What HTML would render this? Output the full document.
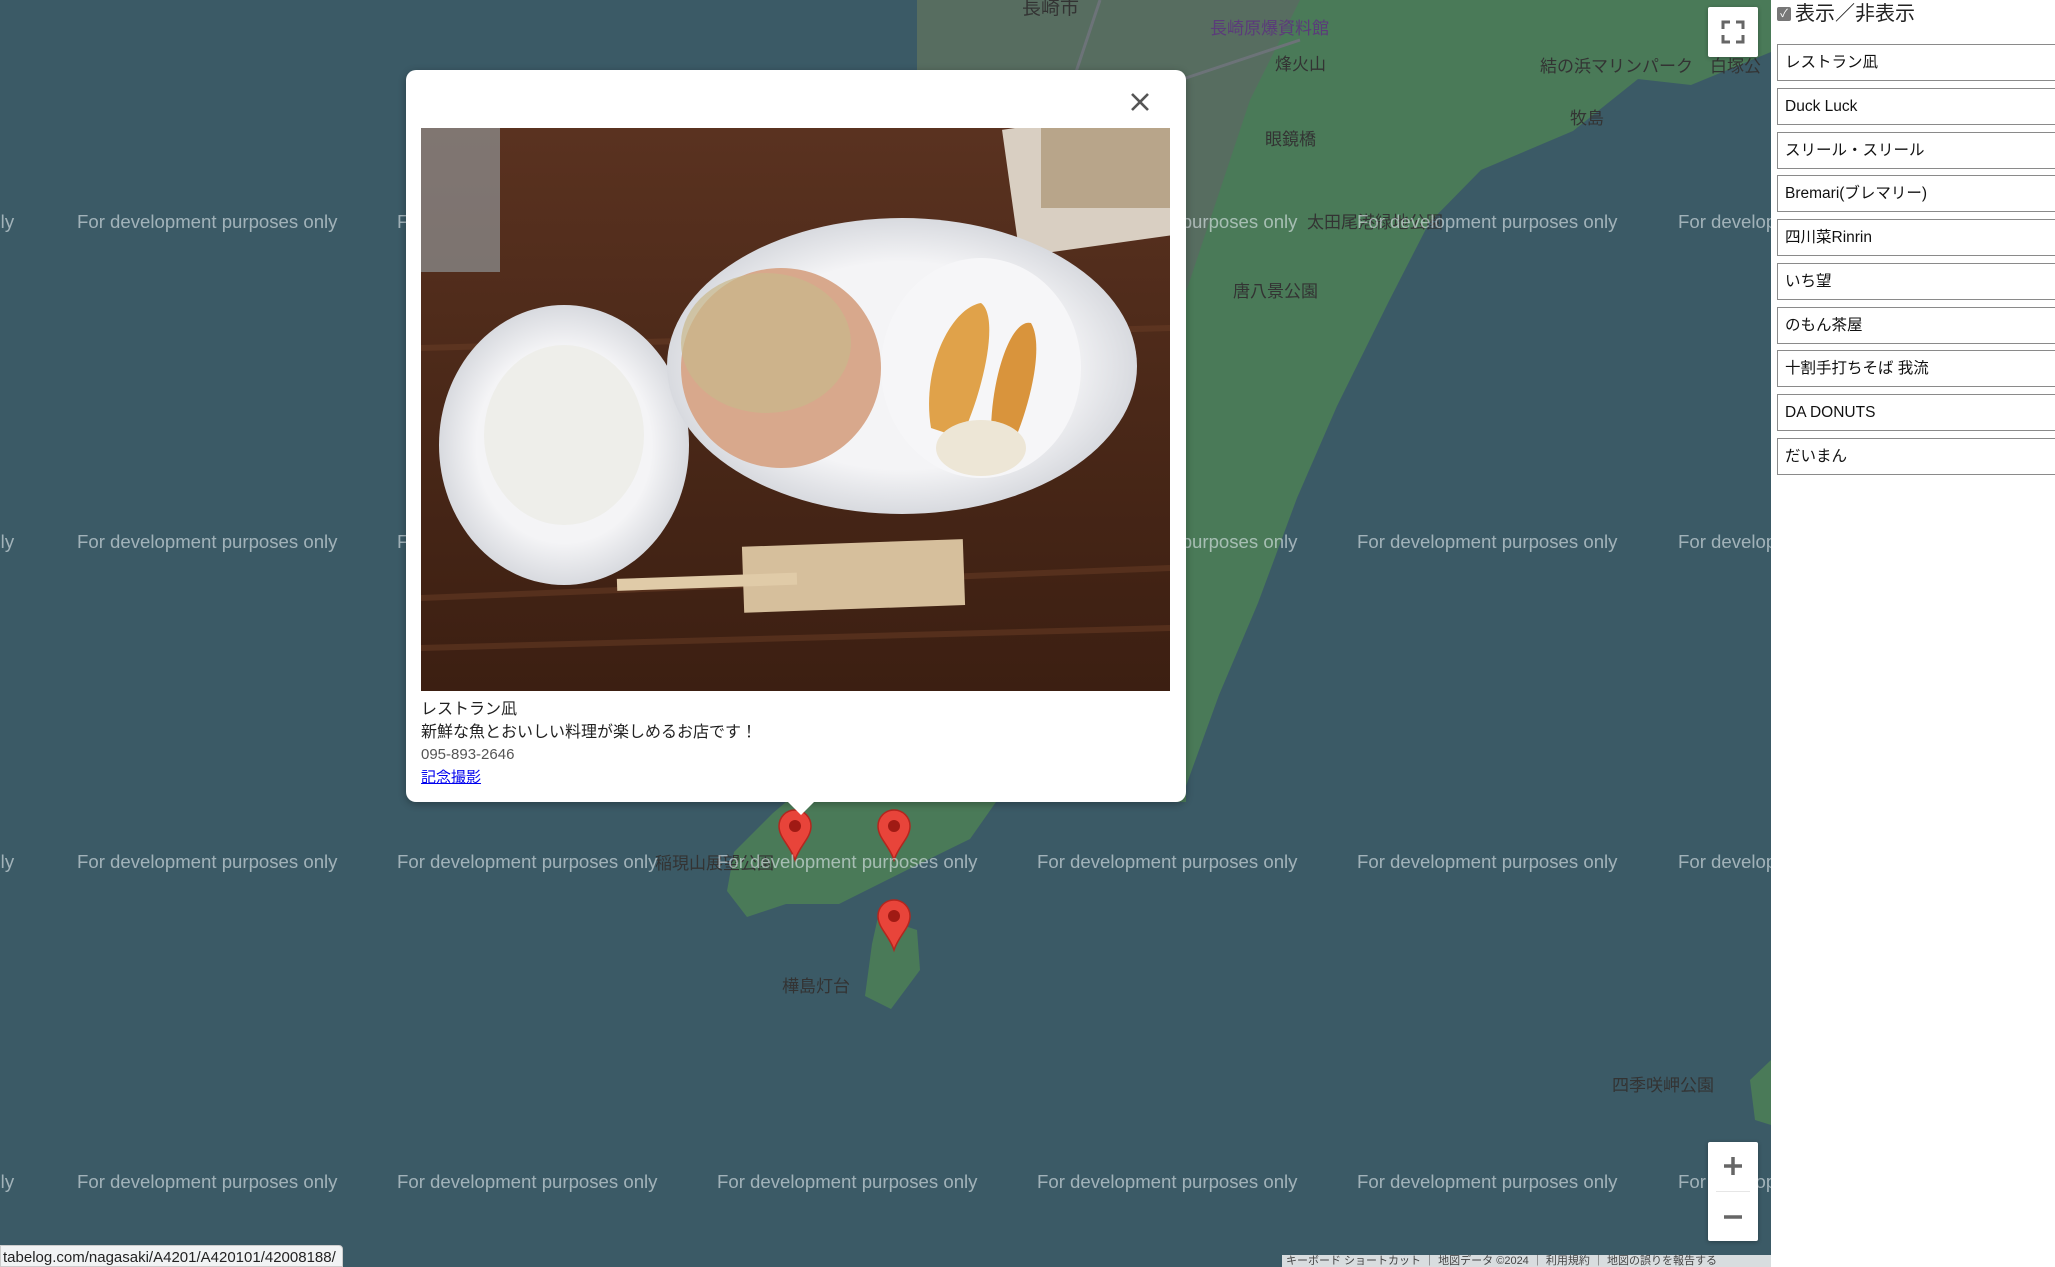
<!DOCTYPE html>
<html><head><meta charset="utf-8"><style>
*{margin:0;padding:0;box-sizing:border-box}
body{width:2055px;height:1267px;overflow:hidden;background:#fff;font-family:"Liberation Sans","Noto Sans CJK JP",sans-serif;position:relative}
#map{position:absolute;left:0;top:0;width:1771px;height:1267px;background:#3b5a66;overflow:hidden}
.wm{position:absolute;color:rgba(225,232,235,0.62);font-size:18.6px;white-space:nowrap}
.side{position:absolute;left:1771px;top:0;width:284px;height:1267px;background:#fff}
.item{position:absolute;left:6px;width:300px;height:37px;border:1.5px solid #8a8a8a;font-size:15.5px;padding:0 7px;color:#111;background:#fff;display:flex;align-items:center;line-height:1;white-space:nowrap}
.btn{position:absolute;background:#fff;border-radius:2px;box-shadow:0 1px 4px rgba(0,0,0,.3)}
</style></head><body>
<div id="map">
<svg width="1771" height="1267" style="position:absolute;left:0;top:0">
<path d="M917,0 L1771,0 L1771,52 L1691,85 L1638,79 L1573,131 L1481,170 L1429,223 L1389,301 L1337,406 L1297,498 L1258,603 L1219,695 L1186,786 L1186,802 L917,802 Z" fill="#4a7a58"/>
<path d="M917,0 L1300,0 L1250,100 L1200,250 L1150,400 L1000,420 L917,300 Z" fill="#5d6864" opacity=".7"/>
<path d="M786,802 L996,802 L970,839 L917,865 L839,904 L786,904 L747,917 L727,891 L734,852 L773,813 Z" fill="#4a7a58"/>
<path d="M878,917 L917,930 L920,970 L891,1009 L865,996 L872,944 Z" fill="#4a7a58"/>
<path d="M1771,1060 L1750,1080 L1755,1120 L1771,1125 Z" fill="#4a7a58"/>
<path d="M1100,0 L1060,120 L1010,200 M1300,40 L1180,80 L1100,130" stroke="#6c7378" stroke-width="3" fill="none"/>
<g font-family="Liberation Sans,Noto Sans CJK JP,sans-serif" font-size="17" fill="#333">
<text x="1022" y="14" font-size="19">長崎市</text>
<text x="1210" y="34" fill="#5b3b7a">長崎原爆資料館</text>
<text x="1275" y="70">烽火山</text>
<text x="1540" y="72">結の浜マリンパーク</text>
<text x="1710" y="72">白塚公</text>
<text x="1570" y="124">牧島</text>
<text x="1265" y="145">眼鏡橋</text>
<text x="1307" y="228">太田尾港緑地公園</text>
<text x="1233" y="297">唐八景公園</text>
<text x="655" y="869">稲現山展望公園</text>
<text x="782" y="992">樺島灯台</text>
<text x="1612" y="1091">四季咲岬公園</text>
</g>
<g fill="#e8443a" stroke="#b3261e" stroke-width="1.5">
<path d="M795,860 C790,845 779,838 779,826 A16,16 0 1 1 811,826 C811,838 800,845 795,860 Z"/>
<path d="M894,860 C889,845 878,838 878,826 A16,16 0 1 1 910,826 C910,838 899,845 894,860 Z"/>
<path d="M894,950 C889,935 878,928 878,916 A16,16 0 1 1 910,916 C910,928 899,935 894,950 Z"/>
</g>
<g fill="#a01a14"><circle cx="795" cy="826" r="6"/><circle cx="894" cy="826" r="6"/><circle cx="894" cy="916" r="6"/></g>
</svg>
<div class="wm" style="left:-20px;top:211px">only</div><div class="wm" style="left:77px;top:211px">For development purposes only</div><div class="wm" style="left:397px;top:211px">For development purposes only</div><div class="wm" style="left:1037px;top:211px">For development purposes only</div><div class="wm" style="left:1357px;top:211px">For development purposes only</div><div class="wm" style="left:1678px;top:211px">For development purposes only</div>
<div class="wm" style="left:-20px;top:531px">only</div><div class="wm" style="left:77px;top:531px">For development purposes only</div><div class="wm" style="left:397px;top:531px">For development purposes only</div><div class="wm" style="left:1037px;top:531px">For development purposes only</div><div class="wm" style="left:1357px;top:531px">For development purposes only</div><div class="wm" style="left:1678px;top:531px">For development purposes only</div>
<div class="wm" style="left:-20px;top:851px">only</div><div class="wm" style="left:77px;top:851px">For development purposes only</div><div class="wm" style="left:397px;top:851px">For development purposes only</div><div class="wm" style="left:717px;top:851px">For development purposes only</div><div class="wm" style="left:1037px;top:851px">For development purposes only</div><div class="wm" style="left:1357px;top:851px">For development purposes only</div><div class="wm" style="left:1678px;top:851px">For development purposes only</div>
<div class="wm" style="left:-20px;top:1171px">only</div><div class="wm" style="left:77px;top:1171px">For development purposes only</div><div class="wm" style="left:397px;top:1171px">For development purposes only</div><div class="wm" style="left:717px;top:1171px">For development purposes only</div><div class="wm" style="left:1037px;top:1171px">For development purposes only</div><div class="wm" style="left:1357px;top:1171px">For development purposes only</div><div class="wm" style="left:1678px;top:1171px">For development purposes only</div>

<div class="btn" style="left:1708px;top:7px;width:50px;height:50px">
<svg width="50" height="50"><path d="M15,22 V15 H22 M28,15 H35 V22 M35,28 V35 H28 M22,35 H15 V28" stroke="#666" stroke-width="3" fill="none"/></svg></div>
<div class="btn" style="left:1708px;top:1142px;width:50px;height:99px">
<svg width="50" height="99"><path d="M16,24 H34 M25,15 V33 M16,75 H34" stroke="#666" stroke-width="3.5"/><path d="M8,49.5 H42" stroke="#e6e6e6"/></svg></div>
<div style="position:absolute;left:1282px;top:1255px;width:489px;height:12px;background:rgba(245,245,245,.85);font-size:11px;color:#444;line-height:12px;padding-left:4px;white-space:nowrap">キーボード ショートカット ｜ 地図データ ©2024 ｜ 利用規約 ｜ 地図の誤りを報告する</div>
<div style="position:absolute;left:0;top:1245px;width:343px;height:22px;background:#f1f3f4;border:1px solid #ccc;border-radius:0 4px 0 0;font-size:15px;color:#222;padding:3px 2px;white-space:nowrap">tabelog.com/nagasaki/A4201/A420101/42008188/</div>

<div style="position:absolute;left:406px;top:70px;width:780px;height:732px;background:#fff;border-radius:10px;box-shadow:0 2px 8px rgba(0,0,0,.3)">
<svg style="position:absolute;left:722px;top:20px" width="24" height="24"><path d="M4,4 L20,20 M20,4 L4,20" stroke="#555" stroke-width="2.6"/></svg>
<div style="position:absolute;left:381px;top:731px;width:0;height:0;border-left:14px solid transparent;border-right:14px solid transparent;border-top:14px solid #fff"></div>
<svg style="position:absolute;left:15px;top:58px" width="749" height="563">
<defs><linearGradient id="w" x1="0" y1="0" x2="0" y2="1"><stop offset="0" stop-color="#5a3220"/><stop offset=".5" stop-color="#4a2818"/><stop offset="1" stop-color="#3c1f12"/></linearGradient>
<radialGradient id="pl"><stop offset=".7" stop-color="#f4f4f6"/><stop offset="1" stop-color="#d8dadf"/></radialGradient></defs>
<rect width="749" height="563" fill="url(#w)"/>
<path d="M0,470 L749,440 M0,520 L749,500 M0,220 L749,200" stroke="#6b3e26" stroke-width="6" opacity=".5"/>
<rect x="590" y="-10" width="170" height="128" fill="#d9cfc2" transform="rotate(-8 670 60)"/>
<rect x="620" y="0" width="129" height="80" fill="#b8a58a"/>
<rect x="0" y="0" width="79" height="144" fill="#9aa3a8" opacity=".6"/>
<ellipse cx="143" cy="317" rx="125" ry="140" fill="url(#pl)"/>
<ellipse cx="143" cy="307" rx="80" ry="90" fill="#eeeeea"/>
<ellipse cx="481" cy="238" rx="235" ry="148" fill="url(#pl)"/>
<ellipse cx="360" cy="240" rx="100" ry="100" fill="#d8a88c"/>
<ellipse cx="345" cy="215" rx="85" ry="70" fill="#c9b88a" opacity=".7"/>
<ellipse cx="560" cy="240" rx="100" ry="110" fill="#f6f6f8"/>
<path d="M510,300 C500,240 530,180 560,175 C580,190 560,270 540,310 Z" fill="#e0a24a"/>
<path d="M570,305 C570,250 590,190 610,195 C625,220 605,290 590,320 Z" fill="#d9943c"/>
<ellipse cx="560" cy="320" rx="45" ry="28" fill="#ede6d6"/>
<rect x="322" y="415" width="221" height="66" fill="#d6bf9c" transform="rotate(-2 430 448)"/>
<rect x="196" y="448" width="180" height="12" fill="#e0cba8" transform="rotate(-2 280 454)"/>
</svg>
<div style="position:absolute;left:15px;top:628px;font-size:16px;line-height:23px;color:#222">
<div>レストラン凪</div>
<div>新鮮な魚とおいしい料理が楽しめるお店です！</div>
<div style="color:#555;font-size:15px;line-height:22px">095-893-2646</div>
<div><a style="color:#00e;text-decoration:underline;font-size:15px">記念撮影</a></div>
</div>
</div>
</div>
<div class="side">
<div style="position:absolute;left:6px;top:-3px;font-size:20px;color:#222;white-space:nowrap"><span style="display:inline-block;width:14px;height:14px;background:#777;border-radius:2px;color:#fff;font-size:11px;line-height:14px;text-align:center;vertical-align:3px;margin-right:4px">✓</span>表示／非表示</div>
<div class="item" style="top:44px">レストラン凪</div>
<div class="item" style="top:88px">Duck Luck</div>
<div class="item" style="top:132px">スリール・スリール</div>
<div class="item" style="top:175px">Bremari(ブレマリー)</div>
<div class="item" style="top:219px">四川菜Rinrin</div>
<div class="item" style="top:263px">いち望</div>
<div class="item" style="top:307px">のもん茶屋</div>
<div class="item" style="top:350px">十割手打ちそば 我流</div>
<div class="item" style="top:394px">DA DONUTS</div>
<div class="item" style="top:438px">だいまん</div>
</div>
</body></html>
